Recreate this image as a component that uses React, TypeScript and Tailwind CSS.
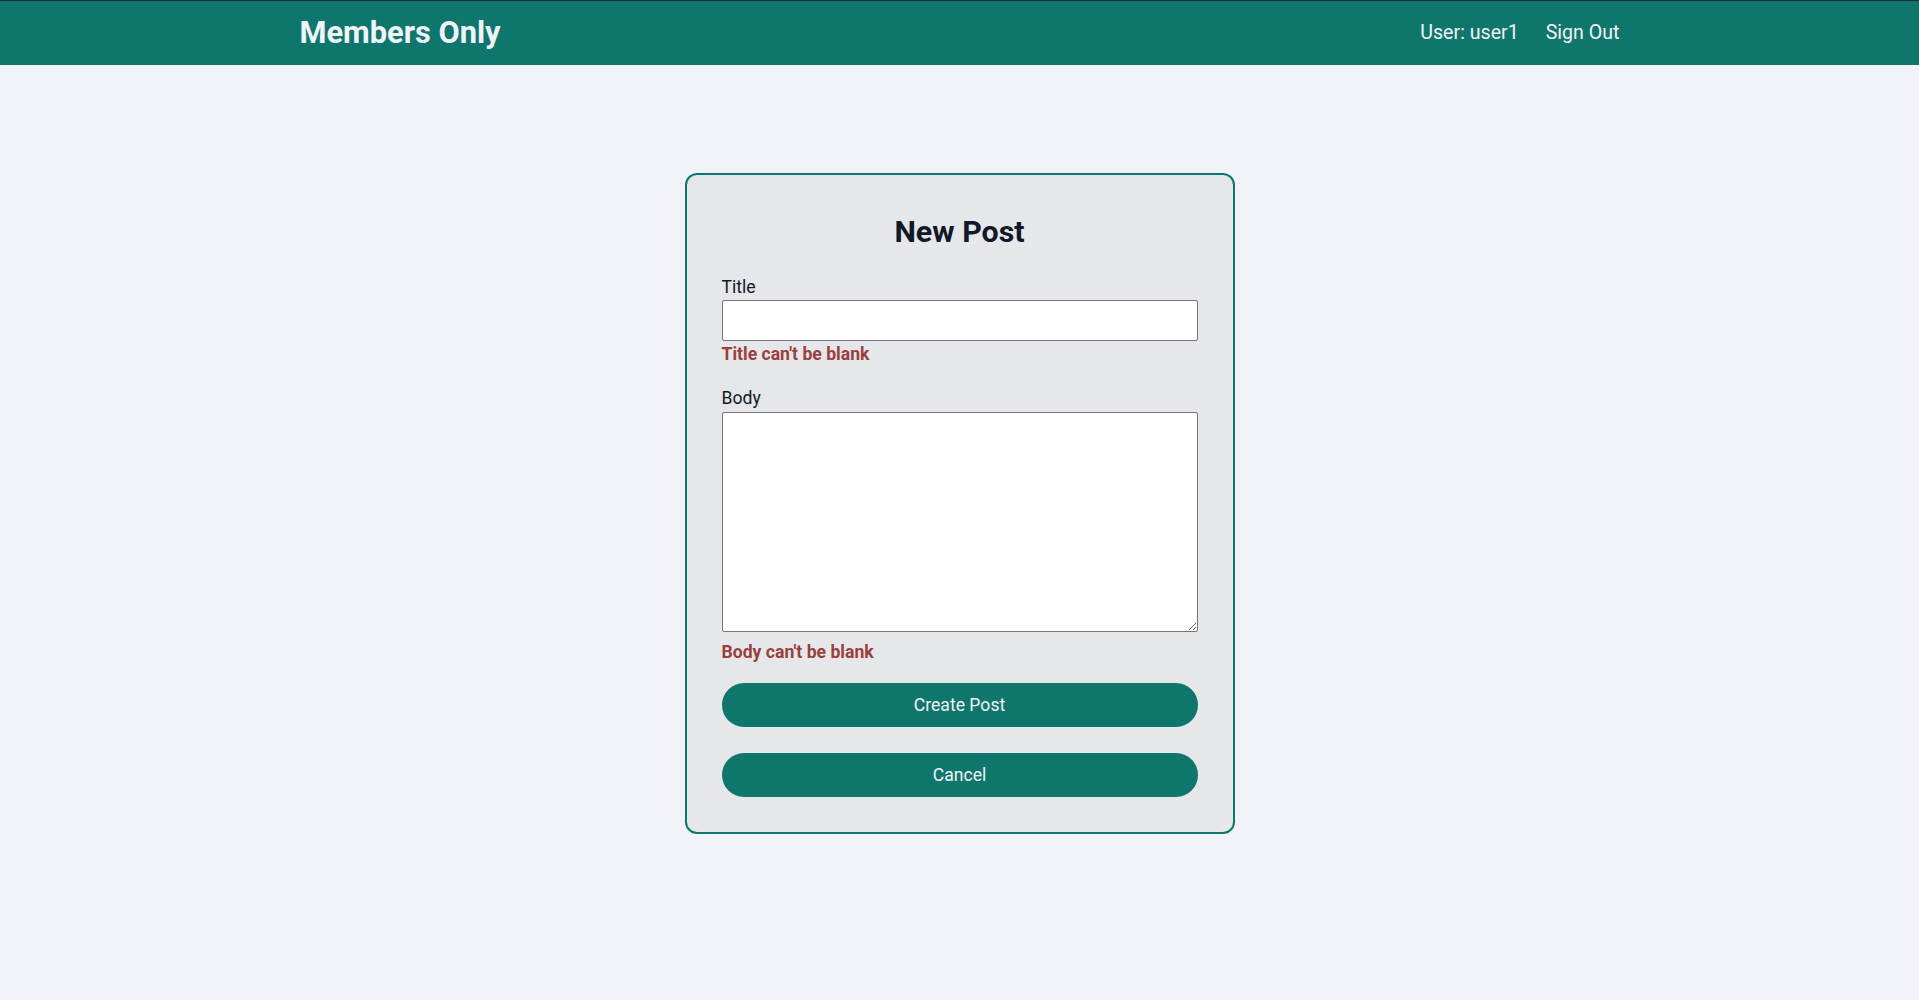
import React from "react";

export default function App() {
  return (
    <div
      className="min-h-screen bg-[#f0f4f8] text-[#111827]"
      style={{ fontFamily: "Roboto, 'Noto Sans', sans-serif" }}
    >
      <header className="h-[65px] bg-[#0f766e] border-t border-[#1f2a2e]">
        <div className="max-w-[1320px] mx-auto h-full flex items-center justify-between">
          <span className="text-[30.8px] leading-[36px] font-bold text-[#f0f4f8]">Members Only</span>
          <nav className="flex items-center gap-[27px] text-[19.6px] leading-[28px] text-[#f0f4f8]">
            <span>User: user1</span>
            <a href="#" className="text-[#f0f4f8]">Sign Out</a>
          </nav>
        </div>
      </header>

      <main className="pt-[108px]">
        <div className="w-[550px] mx-auto bg-[#e5e7eb] border-2 border-[#0f766e] rounded-xl px-[35px] pt-[39px] pb-[35px]">
          <h1 className="text-[30.4px] leading-[36px] font-bold text-center text-[#111827]">New Post</h1>
          <form className="mt-[27px]" onSubmit={(e) => e.preventDefault()}>
            <label htmlFor="title" className="block text-[17.6px] leading-[20px] mb-[3px] text-[#111827]">
              Title
            </label>
            <input
              id="title"
              type="text"
              className="block w-full h-[41px] bg-white border border-[#767676] rounded-[2px] px-2 text-[16px] outline-none"
            />
            <p className="mt-[3px] text-[17.6px] leading-[20px] font-bold text-[#9b3f3d]">Title can't be blank</p>

            <label htmlFor="body" className="block mt-[24px] text-[17.6px] leading-[20px] mb-[4px] text-[#111827]">
              Body
            </label>
            <textarea
              id="body"
              className="block w-full h-[220px] bg-white border border-[#767676] rounded-[2px] p-2 text-[16px] outline-none resize"
            />
            <p className="mt-[10px] text-[17.6px] leading-[20px] font-bold text-[#9b3f3d]">Body can't be blank</p>

            <button
              type="submit"
              className="block w-full mt-[21px] h-[44px] rounded-full bg-[#0f766e] text-[#f0f4f8] text-[17.6px] leading-[20px]"
            >
              Create Post
            </button>
            <button
              type="button"
              className="block w-full mt-[26px] h-[44px] rounded-full bg-[#0f766e] text-[#f0f4f8] text-[17.6px] leading-[20px]"
            >
              Cancel
            </button>
          </form>
        </div>
      </main>
    </div>
  );
}
